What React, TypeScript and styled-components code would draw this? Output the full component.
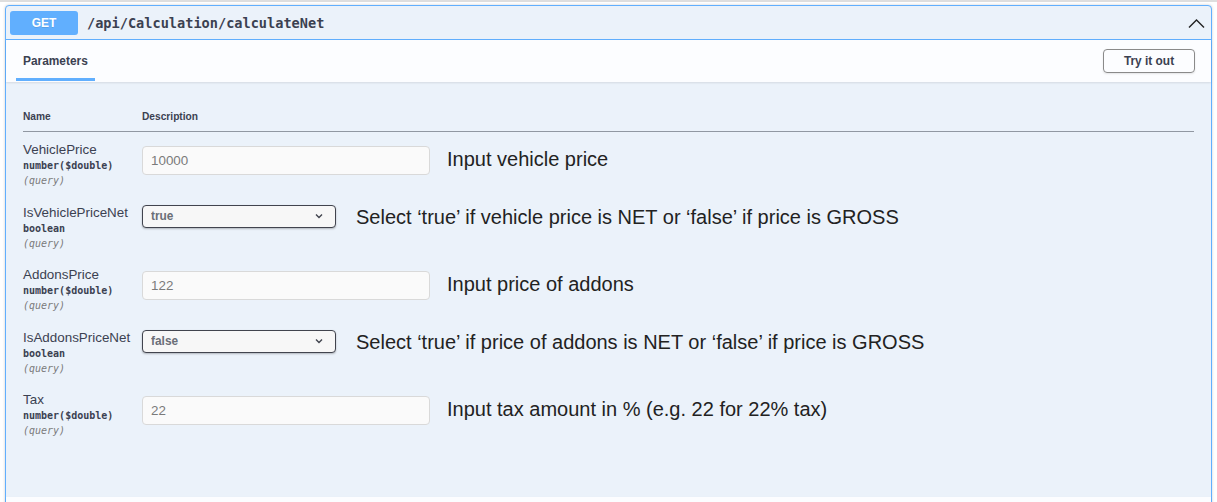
import React, { FC } from 'react';
import styled, { createGlobalStyle } from 'styled-components';

const GlobalStyle = createGlobalStyle`
  html, body {
    margin: 0;
    padding: 0;
    background: #ffffff;
  }
  body {
    font-family: 'Liberation Sans', Arial, sans-serif;
    color: #3b4151;
  }
  * {
    box-sizing: border-box;
  }
`;

const mono = `'DejaVu Sans Mono', 'Liberation Mono', monospace`;

const Page = styled.div`
  height: 502px;
  overflow: hidden;
`;

const TopRule = styled.div`
  height: 2px;
  background: #dedede;
`;

const Opblock = styled.div`
  margin: 3px 5px 0;
  border: 1px solid #61affe;
  border-radius: 4px;
  background: #ebf2fa;
  box-shadow: 0 0 3px rgba(0, 0, 0, 0.19);
`;

const Summary = styled.div`
  display: flex;
  align-items: center;
  padding: 5px 6px 4px 4px;
  border-bottom: 1px solid #61affe;
`;

const MethodBadge = styled.span`
  display: flex;
  align-items: center;
  justify-content: center;
  width: 68px;
  height: 24px;
  border-radius: 3px;
  background: #61affe;
  color: #ffffff;
  font-size: 11.9px;
  font-weight: 700;
  text-shadow: 0 1px 0 rgba(0, 0, 0, 0.1);
`;

const Path = styled.span`
  margin-left: 9px;
  font-family: ${mono};
  font-size: 13.6px;
  font-weight: 600;
  color: #3b4151;
`;

const Collapse = styled.svg`
  margin-left: auto;
  width: 17px;
  height: 17px;
`;

const SectionHeader = styled.div`
  display: flex;
  align-items: center;
  justify-content: space-between;
  height: 42px;
  padding: 0 16px 0 10px;
  background: rgba(255, 255, 255, 0.85);
  box-shadow: 0 1px 2px rgba(0, 0, 0, 0.1);
`;

const Tab = styled.div`
  display: flex;
  align-items: center;
  height: 41px;
  margin-bottom: 1px;
  padding: 3px 7px 0;
  border-bottom: 3.4px solid #61affe;
  font-size: 11.9px;
  font-weight: 700;
  color: #3b4151;
`;

const TryButton = styled.button`
  width: 92px;
  height: 24px;
  padding: 0;
  border: 1.5px solid #8a8a8a;
  border-radius: 4px;
  background: transparent;
  box-shadow: 0 1px 2px rgba(0, 0, 0, 0.1);
  font-family: 'Liberation Sans', Arial, sans-serif;
  font-size: 11.9px;
  font-weight: 700;
  color: #3b4151;
`;

const Body = styled.div`
  height: 415px;
  padding: 17px 17px 0;
`;

const Table = styled.table`
  width: 100%;
  border-collapse: collapse;
`;

const HeadCell = styled.th<{ $width?: number }>`
  width: ${(p) => (p.$width ? `${p.$width}px` : 'auto')};
  padding: 11px 0 7px;
  border-bottom: 1px solid rgba(59, 65, 81, 0.3);
  text-align: left;
  font-size: 10.2px;
  font-weight: 700;
  line-height: 14px;
  color: #3b4151;
`;

const Cell = styled.td`
  padding: 9px 0 6.5px;
  vertical-align: top;
`;

const ParamName = styled.div`
  font-size: 13.4px;
  line-height: 17px;
  color: #3b4151;
`;

const ParamType = styled.div`
  font-family: ${mono};
  font-size: 10px;
  font-weight: 700;
  line-height: 15px;
  color: #3b4151;
`;

const ParamIn = styled.div`
  font-family: ${mono};
  font-size: 10px;
  font-style: italic;
  line-height: 15px;
  color: #7a7a7a;
`;

const Control = styled.div`
  display: flex;
  align-items: center;
`;

const TextInput = styled.input`
  width: 288px;
  height: 29px;
  margin-top: 5px;
  padding: 0 8px;
  border: 1px solid #d9d9d9;
  border-radius: 4px;
  background: #fafafa;
  font-family: 'Liberation Sans', Arial, sans-serif;
  font-size: 13.4px;
  color: #7a7a7a;
`;

const SelectWrap = styled.div`
  position: relative;
`;

const Select = styled.select`
  display: block;
  width: 194px;
  height: 23px;
  padding: 0 30px 0 8px;
  appearance: none;
  border: 1.5px solid #41444e;
  border-radius: 4px;
  background: #f7f7f7;
  box-shadow: 0 1px 2px rgba(0, 0, 0, 0.25);
  font-family: 'Liberation Sans', Arial, sans-serif;
  font-size: 11.9px;
  font-weight: 700;
  color: #6b6f78;
  opacity: 1;
`;

const SelectArrow = styled.svg`
  position: absolute;
  top: 8px;
  right: 13px;
  width: 8px;
  height: 6px;
  pointer-events: none;
`;

const Description = styled.div<{ $gap: number }>`
  margin: 2px 0 0 ${(p) => p.$gap}px;
  font-size: 20px;
  color: #222222;
  white-space: nowrap;
`;

const ResponsesHeader = styled(SectionHeader)`
  padding-left: 17px;
`;

interface Param {
  name: string;
  type: string;
  kind: 'input' | 'select';
  value: string;
  description: string;
}

const params: Param[] = [
  {
    name: 'VehiclePrice',
    type: 'number($double)',
    kind: 'input',
    value: '10000',
    description: 'Input vehicle price',
  },
  {
    name: 'IsVehiclePriceNet',
    type: 'boolean',
    kind: 'select',
    value: 'true',
    description: 'Select \u2018true\u2019 if vehicle price is NET or \u2018false\u2019 if price is GROSS',
  },
  {
    name: 'AddonsPrice',
    type: 'number($double)',
    kind: 'input',
    value: '122',
    description: 'Input price of addons',
  },
  {
    name: 'IsAddonsPriceNet',
    type: 'boolean',
    kind: 'select',
    value: 'false',
    description: 'Select \u2018true\u2019 if price of addons is NET or \u2018false\u2019 if price is GROSS',
  },
  {
    name: 'Tax',
    type: 'number($double)',
    kind: 'input',
    value: '22',
    description: 'Input tax amount in % (e.g. 22 for 22% tax)',
  },
];

const ParamRow: FC<{ param: Param }> = ({ param }) => (
  <tr>
    <Cell>
      <ParamName>{param.name}</ParamName>
      <ParamType>{param.type}</ParamType>
      <ParamIn>(query)</ParamIn>
    </Cell>
    <Cell>
      {param.kind === 'input' ? (
        <Control>
          <TextInput disabled defaultValue={param.value} />
          <Description $gap={17}>{param.description}</Description>
        </Control>
      ) : (
        <Control>
          <SelectWrap>
            <Select disabled defaultValue={param.value}>
              <option value="">--</option>
              <option value="true">true</option>
              <option value="false">false</option>
            </Select>
            <SelectArrow viewBox="0 0 8 6">
              <polyline points="1,1.5 4,4.5 7,1.5" fill="none" stroke="#41444e" strokeWidth="1.4" />
            </SelectArrow>
          </SelectWrap>
          <Description $gap={20}>{param.description}</Description>
        </Control>
      )}
    </Cell>
  </tr>
);

const App: FC = () => (
  <Page>
    <GlobalStyle />
    <TopRule />
    <Opblock>
      <Summary>
        <MethodBadge>GET</MethodBadge>
        <Path>/api/Calculation/calculateNet</Path>
        <Collapse viewBox="0 0 17 17">
          <polyline points="1,12.5 8.5,5 16,12.5" fill="none" stroke="#222" strokeWidth="1.4" />
        </Collapse>
      </Summary>

      <SectionHeader>
        <Tab>Parameters</Tab>
        <TryButton>Try it out</TryButton>
      </SectionHeader>

      <Body>
        <Table>
          <thead>
            <tr>
              <HeadCell $width={119}>Name</HeadCell>
              <HeadCell>Description</HeadCell>
            </tr>
          </thead>
          <tbody>
            {params.map((p) => (
              <ParamRow key={p.name} param={p} />
            ))}
          </tbody>
        </Table>
      </Body>

      <ResponsesHeader />
    </Opblock>
  </Page>
);

export default App;
